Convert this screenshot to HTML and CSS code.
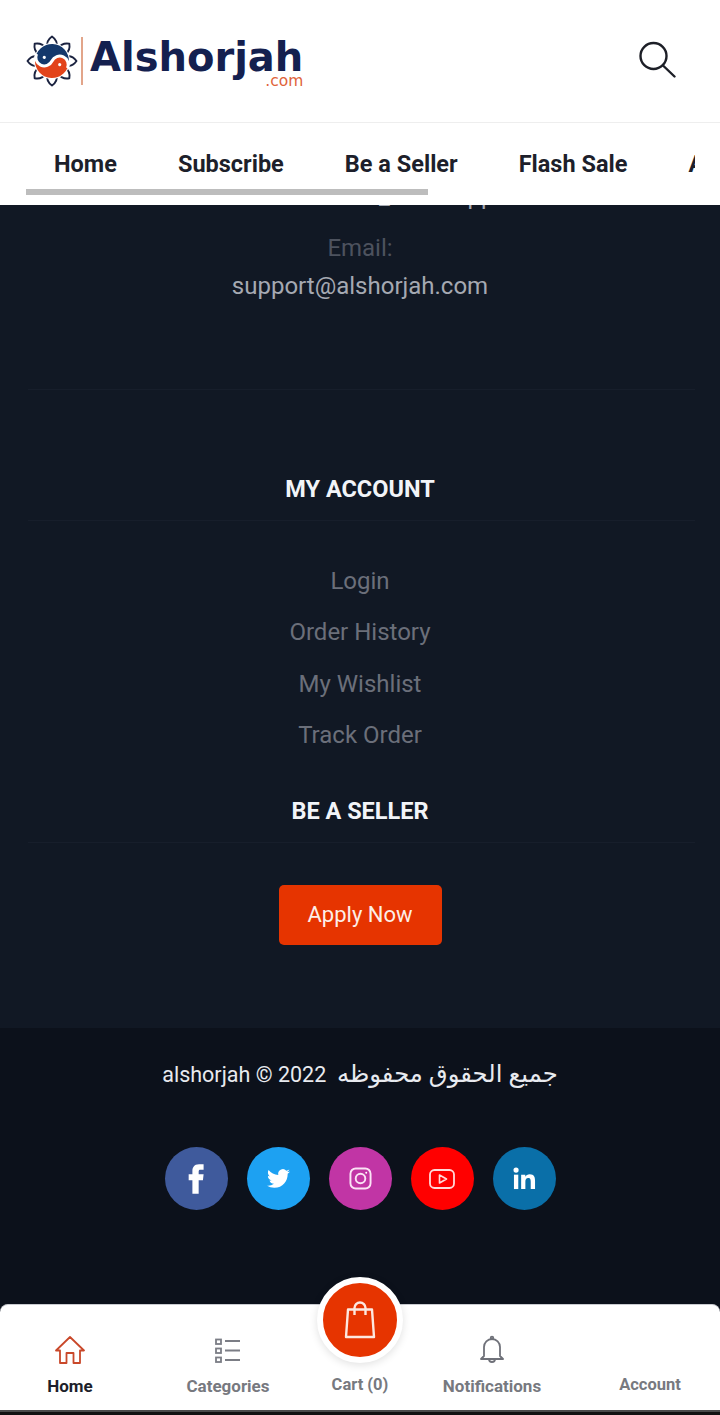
FILE: index.html
```html
<!DOCTYPE html>
<html lang="en">
<head>
  <meta charset="UTF-8" />
  <meta name="viewport" content="width=device-width, initial-scale=1.0"/>
  <title>Alshorjah</title>
  <link rel="stylesheet" href="styles.css">
</head>
<body>
  <header class="top-bar">
    <a class="logo" href="#">
      <svg class="logo-mark" viewBox="0 0 52 52" width="52" height="52">
        <g fill="none" stroke="#1b2340" stroke-width="1.900" stroke-linejoin="round">
          <path id="petal" d="M26 1.500c4 2.800 5.500 6.500 4.500 10.500h-9c-1-4 .5-7.700 4.500-10.500z"/>
          <use href="#petal" transform="rotate(45 26 26)"/>
          <use href="#petal" transform="rotate(90 26 26)"/>
          <use href="#petal" transform="rotate(135 26 26)"/>
          <use href="#petal" transform="rotate(180 26 26)"/>
          <use href="#petal" transform="rotate(225 26 26)"/>
          <use href="#petal" transform="rotate(270 26 26)"/>
          <use href="#petal" transform="rotate(315 26 26)"/>
        </g>
        <circle cx="26" cy="26" r="18" fill="#fff"/>
        <g transform="rotate(-65 26 26)">
          <path d="M26 9a17 17 0 0 1 0 34a8.500 8.500 0 0 0 0-17a8.500 8.500 0 0 1 0-17z" fill="#14386b"/>
          <path d="M26 9a17 17 0 0 0 0 34a8.500 8.500 0 0 0 0-17a8.500 8.500 0 0 1 0-17z" fill="#e2431a"/>
          <path d="M26 9a8.500 8.500 0 0 0 0 17a8.500 8.500 0 0 1 0 17" fill="none" stroke="#fff" stroke-width="3"/>
          <circle cx="26" cy="17.500" r="1.600" fill="#fff"/>
          <circle cx="26" cy="34.500" r="1.600" fill="#fff"/>
        </g>
      </svg>
      <span class="logo-rule"></span>
      <span class="logo-text">
        <span class="logo-name">Alshorjah</span>
        <span class="logo-tld">.com</span>
      </span>
    </a>
    <svg class="search-icon" viewBox="0 0 38 38" width="38" height="38" fill="none" stroke="#1d1f27" stroke-width="2.400" stroke-linecap="round">
      <circle cx="15.500" cy="16" r="13"/>
      <path d="M25 25.500l11.500 11"/>
    </svg>
  </header>

  <nav class="menu">
    <div class="menu-items">
      <a href="#">Home</a>
      <a href="#">Subscribe</a>
      <a href="#">Be a Seller</a>
      <a href="#">Flash Sale</a>
      <a href="#">About</a>
    </div>
    <div class="menu-thumb"></div>
  </nav>

  <footer class="footer">
    <p class="clipped-line">customer care_whatsapp</p>
    <p class="contact-label">Email:</p>
    <p class="contact-value">support@alshorjah.com</p>
    <hr class="first-rule">

    <h3 class="footer-title">MY ACCOUNT</h3>
    <hr>
    <ul class="footer-links">
      <li><a href="#">Login</a></li>
      <li><a href="#">Order History</a></li>
      <li><a href="#">My Wishlist</a></li>
      <li><a href="#">Track Order</a></li>
    </ul>

    <h3 class="footer-title seller-title">BE A SELLER</h3>
    <hr>
    <a class="apply-btn" href="#">Apply Now</a>
  </footer>

  <section class="copyright">
    <p class="copyright-text" dir="rtl"><span class="copyright-ar">جميع الحقوق محفوظه</span>&nbsp; 2022 © alshorjah</p>
    <div class="socials">
      <a class="social facebook" href="#">
        <svg viewBox="0 0 24 24" width="32" height="32" fill="#fff"><path d="M14 8.500V6.300c0-1 .6-1.300 1.200-1.300h2.500V1h-3.400C10.400 1 9.300 3.600 9.300 6v2.500H6.500V13h2.800v10H14V13h3.200l.5-4.500z"/></svg>
      </a>
      <a class="social twitter" href="#">
        <svg viewBox="0 0 24 24" width="23" height="23" fill="#fff"><path d="M23.953 4.570a10 10 0 01-2.825.775 4.958 4.958 0 002.163-2.723c-.951.555-2.005.959-3.127 1.184a4.920 4.920 0 00-8.384 4.482C7.690 8.095 4.067 6.130 1.640 3.162a4.822 4.822 0 00-.666 2.475c0 1.710.870 3.213 2.188 4.096a4.904 4.904 0 01-2.228-.616v.060a4.923 4.923 0 003.946 4.827 4.996 4.996 0 01-2.212.085 4.936 4.936 0 004.604 3.417 9.867 9.867 0 01-6.102 2.105c-.390 0-.779-.023-1.170-.067a13.995 13.995 0 007.557 2.209c9.053 0 13.998-7.496 13.998-13.985 0-.210 0-.420-.015-.630A9.935 9.935 0 0024 4.590z"/></svg>
      </a>
      <a class="social instagram" href="#">
        <svg viewBox="0 0 24 24" width="23" height="23" fill="none" stroke="#fbe3f5" stroke-width="2"><rect x="1.500" y="1.500" width="21" height="21" rx="5.500"/><circle cx="12" cy="12" r="5"/><circle cx="18" cy="6" r="1" fill="#fff" stroke="none"/></svg>
      </a>
      <a class="social youtube" href="#">
        <svg viewBox="0 0 26 20" width="26" height="20" fill="none" stroke="#ffd9d9" stroke-width="1.800"><rect x="1" y="1" width="24" height="18" rx="4.500"/><path d="M10.500 6l7 4-7 4z" stroke-width="1.600" stroke-linejoin="round"/></svg>
      </a>
      <a class="social linkedin" href="#">
        <svg viewBox="0 0 24 24" width="23" height="23" fill="#fff"><circle cx="3.200" cy="3.200" r="2.700"/><rect x="1" y="8" width="4.500" height="15"/><path d="M8.500 8h4.300v2.100c.8-1.400 2.500-2.500 4.700-2.500 4.500 0 5.500 3 5.500 6.800V23h-4.500v-7.500c0-1.800-.2-4-2.600-4s-3 1.900-3 3.900V23H8.500z"/></svg>
      </a>
    </div>
  </section>

  <nav class="bottom-nav">
    <a class="tab active" href="#">
      <svg viewBox="0 0 30 30" width="30" height="30" fill="none" stroke="#c9482a" stroke-width="1.800" stroke-linejoin="round"><path d="M1 15.500 15 2l14 13.500h-4V28H18.500V18h-7v10H5V15.500z"/></svg>
      <span>Home</span>
    </a>
    <a class="tab" href="#">
      <svg viewBox="0 0 28 28" width="28" height="28" fill="none" stroke="#7b7d85" stroke-width="1.800"><rect x="2" y="2.500" width="5" height="4.500"/><rect x="2" y="11.500" width="5" height="4.500"/><rect x="2" y="20.500" width="5" height="4.500"/><path d="M11 4h15M11 13.500h15M11 23h15" stroke-width="2"/></svg>
      <span>Categories</span>
    </a>
    <a class="tab cart" href="#">
      <span class="cart-btn">
        <svg viewBox="0 0 34 38" width="34" height="38" fill="none" stroke="#fde8df" stroke-width="2.400" stroke-linejoin="round"><path d="M5 8.500h24l2 27.500H3z"/><path d="M11.500 14V7a5.500 5.500 0 0 1 11 0v7"/></svg>
      </span>
      <span>Cart (0)</span>
    </a>
    <a class="tab" href="#">
      <svg viewBox="0 0 24 30" width="24" height="30" fill="none" stroke="#6f7179" stroke-width="1.800" stroke-linejoin="round"><path d="M4 21V12a8 8 0 0 1 16 0v9l3 3H1z"/><circle cx="12" cy="3" r="1.300"/><path d="M9 24a3 3 0 0 0 6 0"/></svg>
      <span>Notifications</span>
    </a>
    <a class="tab account" href="#">
      <span>Account</span>
    </a>
  </nav>
  <div class="home-strip"></div>
</body>
</html>
```

FILE: styles.css
```css
* {
  box-sizing: border-box;
}
body {
  margin: 0;
  width: 720px;
  height: 1415px;
  overflow: hidden;
  font-family: Roboto, "DejaVu Sans", sans-serif;
  background: #0c111b;
}
a {
  color: inherit;
  text-decoration: none;
}
p, h3, ul {
  margin: 0;
  padding: 0;
}

/* header */
.top-bar {
  height: 123px;
  background: #fff;
  border-bottom: 1px solid #eee;
  display: flex;
  align-items: center;
  justify-content: space-between;
  padding: 0 44px 6px 26px;
}
.logo {
  display: flex;
  align-items: center;
  margin-top: 6px;
}
.logo-rule {
  width: 2px;
  height: 48px;
  background: #e2a58a;
  margin: 0 7px 0 3px;
}
.logo-text {
  display: flex;
  flex-direction: column;
  align-items: flex-end;
  padding-top: 5px;
}
.logo-name {
  font-family: "DejaVu Sans", sans-serif;
  font-weight: 700;
  font-size: 40px;
  line-height: 34px;
  color: #14204f;
}
.logo-tld {
  font-family: "DejaVu Sans", sans-serif;
  font-size: 15.500px;
  line-height: 12px;
  margin-top: 1px;
  color: #e0633a;
}
.search-icon {
  margin-top: 1px;
}

/* scrolling menu */
.menu {
  height: 82px;
  background: #fff;
  padding: 0 25px 0 26px;
}
.menu-items {
  display: flex;
  gap: 61px;
  height: 66px;
  align-items: center;
  overflow: hidden;
  padding: 16px 0 0 28px;
  font-size: 23.500px;
  font-weight: 700;
  color: #1d1f2b;
  white-space: nowrap;
}
.menu-thumb {
  width: 402px;
  height: 6px;
  background: #bdbdbd;
}

/* footer */
.footer {
  height: 823px;
  background: #111824;
  overflow: hidden;
  text-align: center;
  font-size: 24px;
  padding: 0 25px;
}
.clipped-line {
  margin-top: -25px;
  line-height: 32px;
  color: #a5a9b2;
}
.contact-label {
  margin-top: 17px;
  line-height: 38px;
  color: #4d525e;
}
.contact-value {
  line-height: 38px;
  color: #a5a9b2;
}
.footer hr {
  border: 0;
  height: 1px;
  margin: 0 0 0 3px;
  background: #171e2b;
}
.footer .first-rule {
  margin-top: 84px;
}
.footer-title {
  color: #f2f4f8;
  font-size: 23.500px;
  font-weight: 700;
  line-height: 32px;
  margin-bottom: 15px;
}
.footer .first-rule + .footer-title {
  margin-top: 83px;
}
.footer-links {
  list-style: none;
  margin-top: 35px;
  color: #6b6f7a;
}
.footer-links li {
  height: 51.400px;
  line-height: 51.400px;
}
.seller-title {
  margin-top: 33px;
}
.apply-btn {
  display: block;
  width: 163px;
  height: 60px;
  line-height: 60px;
  margin: 42px auto 0;
  background: #e63400;
  border-radius: 5px;
  color: #fdeee8;
  font-size: 22px;
}

/* copyright */
.copyright {
  height: 276px;
  background: #0c111b;
  padding-top: 30px;
  text-align: center;
}
.copyright-text {
  color: #e8eaef;
  font-size: 21.500px;
  line-height: 32px;
}
.copyright-ar {
  font-size: 24.300px;
}
.socials {
  display: flex;
  justify-content: center;
  gap: 19px;
  margin-top: 56px;
}
.social {
  width: 63px;
  height: 63px;
  border-radius: 50%;
  display: flex;
  align-items: center;
  justify-content: center;
}
.facebook { background: #3f5a9c; }
.twitter { background: #1da1f2; }
.instagram { background: #c135a5; }
.youtube { background: #f00; }
.linkedin { background: #0a6fa8; }

/* bottom tabs */
.bottom-nav {
  position: relative;
  height: 106px;
  background: #fff;
  border-radius: 8px 8px 0 0;
  border-top: 1px solid #c9cbd0;
  display: grid;
  grid-template-columns: 140px 176px 88px 176px 140px;
}
.tab {
  display: flex;
  flex-direction: column;
  align-items: center;
  justify-content: flex-end;
  padding-bottom: 14px;
  gap: 11px;
  font-size: 17px;
  font-weight: 700;
  color: #77797f;
}
.tab svg {
  display: block;
}
.tab.active {
  color: #1d1f2b;
}
.tab.cart,
.tab.account {
  padding-bottom: 16px;
  font-size: 16.500px;
}
.cart-btn {
  position: absolute;
  left: 317px;
  top: -28px;
  width: 86px;
  height: 86px;
  border-radius: 50%;
  background: #e63400;
  border: 6px solid #fff;
  box-shadow: 0 2px 8px rgba(0,0,0,0.12);
  display: flex;
  align-items: center;
  justify-content: center;
}
.home-strip {
  height: 5px;
  background: linear-gradient(#4a4a4a 0 2px, #111 2px);
}
```
